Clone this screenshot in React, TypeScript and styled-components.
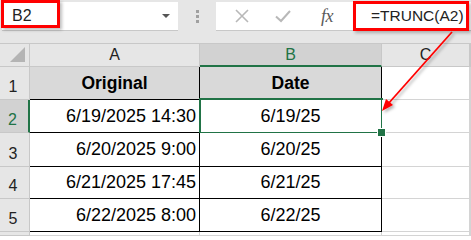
import React from 'react';
import styled, { createGlobalStyle, css } from 'styled-components';

const GlobalStyle = createGlobalStyle`
    html, body {
        margin: 0;
        padding: 0;
        background: #ffffff;
    }
    * {
        box-sizing: border-box;
    }
`;

const GREEN = '#217346';

const Page = styled.div`
    position: relative;
    width: 471px;
    height: 236px;
    overflow: hidden;
    background: #ffffff;
    font-family: "Liberation Sans", Arial, sans-serif;
`;

const TopBand = styled.div`
    height: 43px;
    background: #e6e6e6;
    padding: 2px 0 0 2px;
    display: flex;
    align-items: flex-start;
`;

const NameBox = styled.div`
    position: relative;
    width: 176px;
    height: 29px;
    background: #ffffff;
    border-bottom: 1px solid #c8c8c8;
    display: flex;
    align-items: center;
    justify-content: space-between;
    padding: 0 8px 0 10px;
    font-size: 16px;
    color: #222;
`;

const DropArrow = styled.span`
    width: 0;
    height: 0;
    border-left: 4px solid transparent;
    border-right: 4px solid transparent;
    border-top: 4px solid #555;
`;

const Grip = styled.div`
    width: 38px;
    height: 29px;
    display: flex;
    flex-direction: column;
    align-items: center;
    justify-content: center;
    gap: 2px;
`;

const GripDot = styled.span`
    width: 3px;
    height: 3px;
    background: #a0a0a0;
`;

const FormulaBox = styled.div`
    flex: 1;
    height: 29px;
    background: #ffffff;
    border-bottom: 1px solid #c8c8c8;
    display: flex;
    align-items: center;
`;

const IconSlot = styled.div<{ $w: number }>`
    width: ${p => p.$w}px;
    height: 29px;
    display: flex;
    align-items: center;
    justify-content: center;
`;

const Fx = styled.span`
    font-family: "Liberation Serif", "Times New Roman", serif;
    font-style: italic;
    font-size: 18px;
    color: #5a5a5a;
    letter-spacing: -0.5px;
`;

const FormulaText = styled.div`
    position: relative;
    flex: 1;
    height: 29px;
    display: flex;
    align-items: center;
    padding-left: 15px;
    font-size: 15.5px;
    color: #222;
`;

const Highlight = styled.div<{ $l: number; $t: number; $w: number; $h: number }>`
    position: absolute;
    left: ${p => p.$l}px;
    top: ${p => p.$t}px;
    width: ${p => p.$w}px;
    height: ${p => p.$h}px;
    border: 3px solid #ff0000;
    box-shadow: 2px 2px 3px rgba(0, 0, 0, 0.25);
    pointer-events: none;
`;

const Sheet = styled.div`
    display: grid;
    grid-template-columns: 30px 170px 182px 88px 1fr;
    grid-template-rows: 24px 33px 33px 34px 32px 33px 1fr;
    height: 193px;
`;

const Corner = styled.div`
    background: #e6e6e6;
    border-top: 1px solid #c8c8c8;
    border-right: 1px solid #c8c8c8;
    border-bottom: 1px solid #c8c8c8;
    display: flex;
    align-items: flex-end;
    justify-content: flex-end;
    padding: 0 4px 4px 0;
`;

const CornerTriangle = styled.span`
    width: 0;
    height: 0;
    border-left: 15px solid transparent;
    border-bottom: 15px solid #b4b4b4;
`;

const ColHeader = styled.div<{ $active?: boolean }>`
    background: ${p => (p.$active ? '#d2d2d2' : '#e6e6e6')};
    border-top: 1px solid #c8c8c8;
    border-right: 1px solid #c8c8c8;
    border-bottom: ${p => (p.$active ? `2px solid ${GREEN}` : '1px solid #c8c8c8')};
    color: ${p => (p.$active ? GREEN : '#222')};
    font-size: 16px;
    display: flex;
    align-items: center;
    justify-content: center;
`;

const RowHeader = styled.div<{ $active?: boolean }>`
    background: ${p => (p.$active ? '#d2d2d2' : '#e6e6e6')};
    border-right: ${p => (p.$active ? `2px solid ${GREEN}` : '1px solid #c8c8c8')};
    border-bottom: 1px solid #c8c8c8;
    color: ${p => (p.$active ? GREEN : '#222')};
    font-size: 16px;
    display: flex;
    align-items: flex-end;
    justify-content: center;
    padding: 0 3px 3px 0;
`;

const Cell = styled.div<{ $align?: 'right' | 'center'; $head?: boolean; $table?: boolean; $selected?: boolean }>`
    position: relative;
    display: flex;
    align-items: center;
    justify-content: ${p => (p.$align === 'right' ? 'flex-end' : 'center')};
    padding: ${p => (p.$align === 'right' ? '0 3px 0 0' : '0')};
    font-size: ${p => (p.$head ? '17.5px' : '18px')};
    font-weight: ${p => (p.$head ? 700 : 400)};
    color: #000;
    background: ${p => (p.$head ? '#d9d9d9' : '#ffffff')};
    border-right: 1px solid ${p => (p.$table ? '#000' : '#d4d4d4')};
    border-bottom: 1px solid ${p => (p.$table ? '#000' : '#d4d4d4')};
    ${p =>
        p.$selected &&
        css`
            &::after {
                content: '';
                position: absolute;
                left: -1px;
                top: -2px;
                right: -2px;
                bottom: -2px;
                border: 2px solid ${GREEN};
            }
            &::before {
                content: '';
                position: absolute;
                right: -5px;
                bottom: -5px;
                width: 7px;
                height: 7px;
                background: ${GREEN};
                border: 1px solid #ffffff;
                z-index: 1;
            }
        `}
`;

const Overlay = styled.svg`
    position: absolute;
    left: 0;
    top: 0;
    pointer-events: none;
`;

const rows = [
    { a: '6/19/2025 14:30', b: '6/19/25' },
    { a: '6/20/2025 9:00', b: '6/20/25' },
    { a: '6/21/2025 17:45', b: '6/21/25' },
    { a: '6/22/2025 8:00', b: '6/22/25' },
];

const CancelIcon = () => (
    <svg width="16" height="16" viewBox="0 0 16 16">
        <path d="M2 2 L14 14 M14 2 L2 14" stroke="#b8b8b8" strokeWidth="1.6" fill="none" />
    </svg>
);

const CheckIcon = () => (
    <svg width="18" height="16" viewBox="0 0 18 16">
        <path d="M2 8.5 L7 13 L16 3" stroke="#b8b8b8" strokeWidth="2" fill="none" />
    </svg>
);

export default function App() {
    return (
        <Page>
            <GlobalStyle />
            <TopBand>
                <NameBox>
                    <span>B2</span>
                    <DropArrow />
                </NameBox>
                <Grip>
                    <GripDot />
                    <GripDot />
                    <GripDot />
                </Grip>
                <FormulaBox>
                    <IconSlot $w={52}><CancelIcon /></IconSlot>
                    <IconSlot $w={30}><CheckIcon /></IconSlot>
                    <IconSlot $w={58}><Fx>fx</Fx></IconSlot>
                    <FormulaText>=TRUNC(A2)</FormulaText>
                </FormulaBox>
            </TopBand>
            <Highlight $l={1} $t={0} $w={59} $h={28} />
            <Highlight $l={353} $t={1} $w={116} $h={30} />

            <Sheet>
                <Corner><CornerTriangle /></Corner>
                <ColHeader>A</ColHeader>
                <ColHeader $active>B</ColHeader>
                <ColHeader>C</ColHeader>
                <ColHeader />

                <RowHeader>1</RowHeader>
                <Cell $head $table>Original</Cell>
                <Cell $head $table>Date</Cell>
                <Cell />
                <Cell />

                {rows.map((r, i) => (
                    <React.Fragment key={r.b}>
                        <RowHeader $active={i === 0}>{i + 2}</RowHeader>
                        <Cell $align="right" $table>{r.a}</Cell>
                        <Cell $table $selected={i === 0}>{r.b}</Cell>
                        <Cell />
                        <Cell />
                    </React.Fragment>
                ))}

                <RowHeader />
                <Cell />
                <Cell />
                <Cell />
                <Cell />
            </Sheet>

            <Overlay width="471" height="236" viewBox="0 0 471 236">
                <defs>
                    <filter id="arrowShadow" x="-20%" y="-20%" width="140%" height="140%">
                        <feDropShadow dx="2" dy="2" stdDeviation="1.5" floodColor="#000" floodOpacity="0.3" />
                    </filter>
                </defs>
                <g filter="url(#arrowShadow)">
                    <line x1="452" y1="32" x2="388" y2="104" stroke="#ff0000" strokeWidth="1.8" />
                    <polygon points="382,111 386,99 393,105" fill="#ff0000" />
                </g>
            </Overlay>
        </Page>
    );
}
